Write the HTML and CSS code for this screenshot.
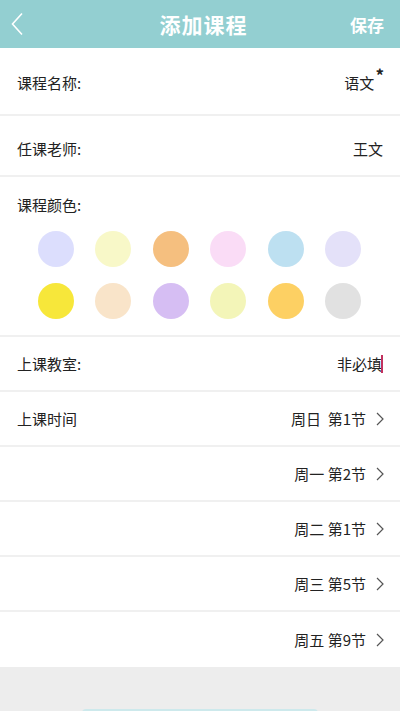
FILE: index.html
```html
<!DOCTYPE html>
<html lang="zh">
<head>
<meta charset="utf-8">
<link rel="stylesheet" href="styles.css">
</head>
<body>
<div class="page">
  <header class="topbar">
    <svg class="back" width="14" height="24" viewBox="0 0 14 24"><path d="M11 1.5 L1.5 12 L11 22.5" fill="none" stroke="#fff" stroke-width="1.6"/></svg>
    <div class="title">添加课程</div>
    <div class="save">保存</div>
  </header>
  <div class="row row-name">
    <span class="label">课程名称:</span>
    <span class="value">语文<sup class="star">*</sup></span>
  </div>
  <div class="row row-teacher">
    <span class="label">任课老师:</span>
    <span class="value">王文</span>
  </div>
  <div class="colors">
    <div class="label">课程颜色:</div>
    <div class="grid">
      <span class="dot c1"></span><span class="dot c2"></span><span class="dot c3"></span>
      <span class="dot c4"></span><span class="dot c5"></span><span class="dot c6"></span>
      <span class="dot c7"></span><span class="dot c8"></span><span class="dot c9"></span>
      <span class="dot c10"></span><span class="dot c11"></span><span class="dot c12"></span>
    </div>
  </div>
  <div class="row row-std">
    <span class="label">上课教室:</span>
    <span class="value">非必填<span class="caret"></span></span>
  </div>
  <div class="row row-std">
    <span class="label">上课时间</span>
    <span class="value">周日&nbsp;&nbsp;第1节<svg class="chev" width="8" height="14" viewBox="0 0 8 14"><path d="M1 1 L7 7 L1 13" fill="none" stroke="#555" stroke-width="1.2"/></svg></span>
  </div>
  <div class="row row-std">
    <span class="label"></span>
    <span class="value">周一 第2节<svg class="chev" width="8" height="14" viewBox="0 0 8 14"><path d="M1 1 L7 7 L1 13" fill="none" stroke="#555" stroke-width="1.2"/></svg></span>
  </div>
  <div class="row row-std">
    <span class="label"></span>
    <span class="value">周二 第1节<svg class="chev" width="8" height="14" viewBox="0 0 8 14"><path d="M1 1 L7 7 L1 13" fill="none" stroke="#555" stroke-width="1.2"/></svg></span>
  </div>
  <div class="row row-std">
    <span class="label"></span>
    <span class="value">周三 第5节<svg class="chev" width="8" height="14" viewBox="0 0 8 14"><path d="M1 1 L7 7 L1 13" fill="none" stroke="#555" stroke-width="1.2"/></svg></span>
  </div>
  <div class="row row-std last">
    <span class="label"></span>
    <span class="value">周五 第9节<svg class="chev" width="8" height="14" viewBox="0 0 8 14"><path d="M1 1 L7 7 L1 13" fill="none" stroke="#555" stroke-width="1.2"/></svg></span>
  </div>
  <div class="footer">
    <div class="btn"></div>
  </div>
</div>
</body>
</html>
```
FILE: styles.css
```css
html, body {
  margin: 0;
  padding: 0;
  background: #ededed;
}
body {
  font-family: "Noto Sans CJK SC", "Noto Sans", sans-serif;
  color: #222;
}
.page {
  width: 400px;
  height: 711px;
  overflow: hidden;
  display: flex;
  flex-direction: column;
}
.topbar {
  height: 48px;
  flex: none;
  background: #93cfd1;
  display: flex;
  align-items: center;
  justify-content: space-between;
  padding: 0 16px 0 11px;
  box-sizing: border-box;
  color: #fff;
}
.back {
  display: block;
}
.title {
  font-size: 21px;
  font-weight: bold;
  letter-spacing: 1px;
  margin-left: 32px;
}
.save {
  font-size: 17px;
  font-weight: bold;
}
.row {
  background: #fff;
  box-sizing: border-box;
  border-bottom: 2px solid #f0f0f0;
  display: flex;
  align-items: center;
  justify-content: space-between;
  padding: 0 17px;
  font-size: 15px;
  flex: none;
}
.row-name {
  height: 68px;
  padding-top: 2px;
}
.row-teacher {
  height: 61px;
  padding-top: 6px;
}
.row-std {
  height: 55px;
}
.row.last {
  border-bottom: none;
}
.value {
  display: flex;
  align-items: center;
  color: #222;
}
.star {
  font-size: 17px;
  font-weight: bold;
  line-height: 1;
  align-self: flex-start;
  margin-top: -6px;
  margin-left: 1px;
  margin-right: -1px;
}
.caret {
  display: inline-block;
  width: 2px;
  height: 18px;
  background: #c2325e;
  margin-left: -1px;
}
.chev {
  margin-left: 10px;
  margin-right: -1px;
}
.colors {
  background: #fff;
  height: 160px;
  box-sizing: border-box;
  border-bottom: 2px solid #f0f0f0;
  padding: 17px 0 0 0;
  flex: none;
}
.colors .label {
  font-size: 15px;
  padding-left: 17px;
  line-height: 22px;
}
.grid {
  display: grid;
  grid-template-columns: repeat(6, 57.5px);
  justify-items: center;
  row-gap: 16px;
  padding: 15px 0 0 27px;
}
.dot {
  width: 36px;
  height: 36px;
  border-radius: 50%;
  display: block;
}
.c1 { background: #dcdefd; }
.c2 { background: #f8f8c8; }
.c3 { background: #f5bf7f; }
.c4 { background: #fadcf6; }
.c5 { background: #bde0f1; }
.c6 { background: #e4e1f9; }
.c7 { background: #f7e73a; }
.c8 { background: #f9e4c9; }
.c9 { background: #d6bef3; }
.c10 { background: #f3f5b8; }
.c11 { background: #fdd063; }
.c12 { background: #e1e1e1; }
.footer {
  flex: 1;
  background: #ededed;
  padding-top: 42px;
  display: flex;
  justify-content: center;
}
.btn {
  width: 236px;
  height: 40px;
  background: #cde9ec;
  border-radius: 4px;
}
```
